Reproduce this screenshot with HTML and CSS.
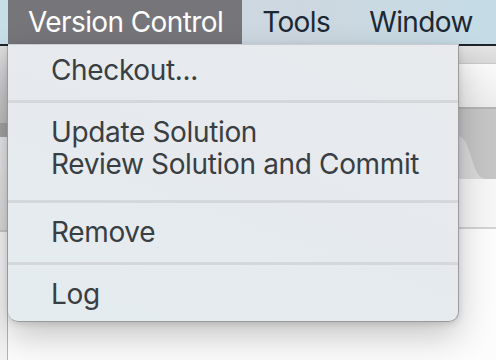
FILE: index.html
```html
<!DOCTYPE html>
<html>
<head>
<meta charset="utf-8">
<link rel="stylesheet" href="styles.css">
</head>
<body>
  <nav class="menubar">
    <div class="mb-item active">Version Control</div>
    <div class="mb-item">Tools</div>
    <div class="mb-item">Window</div>
  </nav>
  <div class="window">
    <div class="side"></div>
    <div class="main">
      <div class="toolbar"></div>
      <div class="pathbar"></div>
      <div class="tabs">
        <svg class="tab-svg" width="488" height="70" viewBox="0 0 488 70">
          <path d="M0 27 H448 C456 27 459 34 462 44 C466 58 470 70 478 70 H0 Z" fill="#d9d9d9"/>
        </svg>
      </div>
      <div class="editor-head"></div>
      <div class="editor"></div>
    </div>
  </div>
  <div class="dropdown">
    <div class="item">Checkout...</div>
    <div class="sep sep-a"></div>
    <div class="item">Update Solution</div>
    <div class="item">Review Solution and Commit</div>
    <div class="sep sep-b"></div>
    <div class="item">Remove</div>
    <div class="sep sep-c"></div>
    <div class="item">Log</div>
  </div>
</body>
</html>
```
FILE: styles.css
```css
* { box-sizing: border-box; }
html, body {
  margin: 0;
  padding: 0;
  width: 496px;
  height: 360px;
  overflow: hidden;
  background: #fbfbfb;
  font-family: "Inter", "Liberation Sans", sans-serif;
}
.menubar {
  height: 44px;
  display: flex;
  padding-left: 8px;
  background: linear-gradient(to right, #c7dde8 0%, #ccd9e3 40%, #cdd7df 60%, #c4dce6 100%);
}
.mb-item {
  flex: none;
  height: 44px;
  line-height: 44px;
  padding: 0 19px 0 20px;
  font-size: 28px;
  color: #1c2833;
  letter-spacing: -0.6px;
  white-space: nowrap;
}
.mb-item.active {
  background: #767579;
  color: #ffffff;
}
.window {
  display: flex;
  border-top: 2px solid #1d242a;
  height: 316px;
}
.side {
  width: 8px;
  border-right: 1px solid #b4b4b4;
  background: linear-gradient(to bottom,
    #dedede 0, #bcbcbc 77px,
    #a2a2a2 77px, #a2a2a2 91px,
    #e6e6e6 91px, #d8d8d8 184px,
    #c6c6c6 184px, #c6c6c6 186px,
    #f2f2f2 186px);
}
.main {
  flex: 1;
  display: flex;
  flex-direction: column;
}
.toolbar {
  height: 18px;
  background: linear-gradient(to bottom, #e4e4e4, #d9d9d9);
  border-bottom: 1px solid #c9c9c9;
}
.pathbar {
  height: 45px;
  background: linear-gradient(to bottom, #fafafa, #ececec);
  border-bottom: 2px solid #b3b3b3;
}
.tabs {
  height: 70px;
  background: #c5c5c5;
  display: flex;
}
.tab-svg { display: block; }
.editor-head {
  height: 50px;
  background: linear-gradient(to right, #f0f0f0, #f6f6f6);
  border-bottom: 2px solid #d3d3d3;
}
.editor {
  flex: 1;
  background: #fcfcfc;
}
.dropdown {
  position: absolute;
  left: 8px;
  top: 44px;
  width: 451px;
  height: 278px;
  padding-top: 9px;
  background: linear-gradient(200deg, #e8eaed 0%, #e6eaee 50%, #e4ecef 100%);
  border-top: 1px solid #c9cdd1;
  border-right: 1px solid #9c9c9c;
  border-bottom: 1px solid #9a9a9a;
  border-radius: 0 0 10px 10px;
  box-shadow: 0 14px 34px rgba(0, 0, 0, 0.22), 0 2px 6px rgba(0, 0, 0, 0.12);
}
.item {
  height: 32px;
  line-height: 32px;
  padding-left: 43px;
  font-size: 28px;
  color: #393e43;
  letter-spacing: -0.35px;
  white-space: nowrap;
}
.sep {
  height: 3px;
  background: #d4d8db;
}
.sep-a { margin: 14px 0 13px; }
.sep-b { margin: 20px 0 13px; }
.sep-c { margin: 14px 0 13px; }
```
